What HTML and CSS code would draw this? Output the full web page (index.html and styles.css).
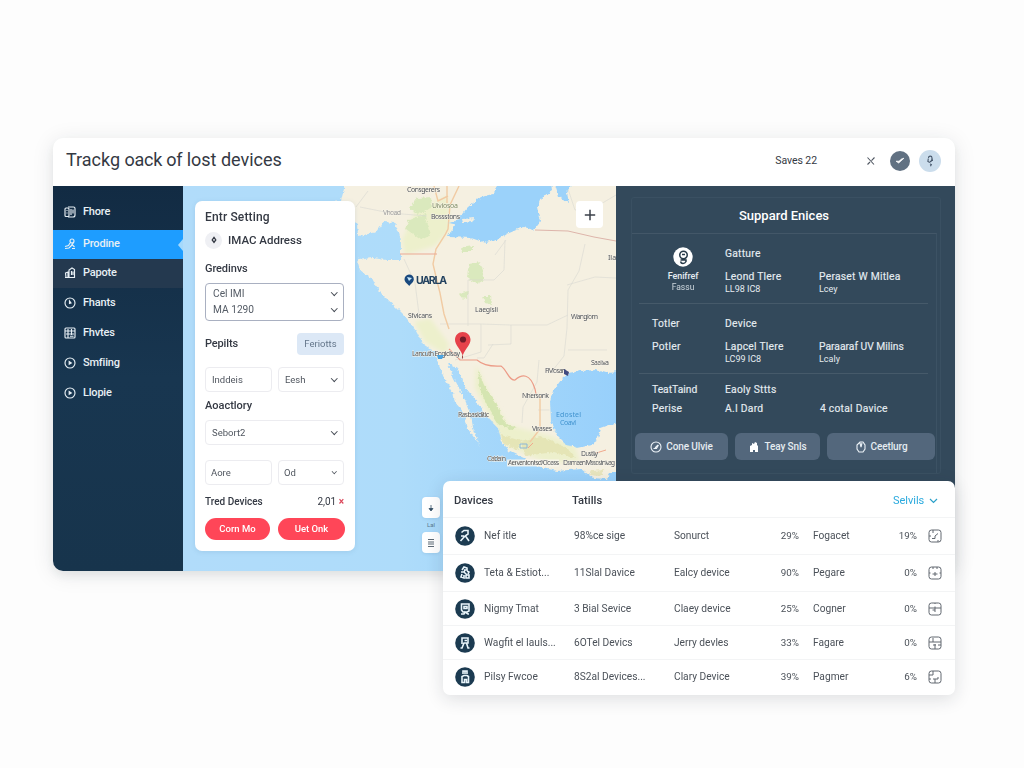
FILE: index.html
```html
<!DOCTYPE html>
<html lang="en">
<head>
<meta charset="utf-8">
<title>Tracking of lost devices</title>
<link rel="stylesheet" href="styles.css">
</head>
<body>
<main class="window">
  <header class="topbar">
    <h1>Trackg <span class="tight">oack of</span> lost devices</h1>
    <span class="saves">Saves 22</span>
    <svg class="close" width="10" height="10" viewBox="0 0 10 10"><path d="M1.5 1.5 8 8.500M8.500 1.500 5.500 4.600M4 6 1.500 8.500" /></svg>
    <span class="status"><svg width="20" height="20" viewBox="0 0 20 20"><path d="M6 10.200 8.700 12 14 7.200 11.500 8 9 10.200Z" fill="#fff" stroke="#fff" stroke-width=".7"/></svg></span>
    <span class="avatar"><svg width="22" height="22" viewBox="0 0 22 22"><path d="M9.500 8c0-2.500 3.500-2.500 3.500 0 .3 2-1 3.500-2 4M9.300 8.500l-.4 3 2 1M11 14l1.300.5-.8 1.700M13 8l.5 3" fill="none" stroke="#46576b" stroke-width="1.100"/></svg></span>
  </header>
  <div class="content">
    <nav class="sidebar">
      <a class="item first"><svg viewBox="0 0 12 12"><rect x="1" y="2" width="4" height="8.500" rx="1"/><path d="M4 1h5.500q1.500 0 1.500 1.500V9q0 2-2 2H4M7 3v6M9 3.500v4M2.500 4.500h1M2.500 7h1"/></svg>Fhore</a>
      <a class="item active"><svg viewBox="0 0 12 12"><circle cx="8" cy="3" r="2"/><path d="M9.500 4.500 8 6.500l2.500 2.500M6 5 4.500 7.500 1 8.500M1 10.500l4-.5 3-3M8 10.500h3"/></svg>Prodine</a>
      <a class="item hovered"><svg viewBox="0 0 12 12"><path d="M5 10.500V3l3-2 2.500 1.500v8zM7.500 4v4M9 4.500V8M1.500 6 4 5v5.500H2zM1 10.500h9"/></svg>Papote</a>
      <a class="item"><svg viewBox="0 0 12 12"><circle cx="6" cy="6" r="5"/><path d="M5.500 4v2.500L7 6z"/></svg>Fhants</a>
      <a class="item"><svg viewBox="0 0 12 12"><rect x="1" y="1" width="10" height="10" rx="1"/><path d="M1 4h10M4 2v9M7.500 2v6M2 7h8M6 9.200h3.500"/></svg>Fhvtes</a>
      <a class="item"><svg viewBox="0 0 12 12"><circle cx="6" cy="6" r="5"/><path d="M5.200 4.500v2.800L7.300 6z" fill="#eef5fa"/></svg>Smfiing</a>
      <a class="item"><svg viewBox="0 0 12 12"><circle cx="6" cy="6" r="5"/><path d="M5.200 4.500v2.800L7.300 6z" fill="#eef5fa"/></svg>Llopie</a>
    </nav>

    <section class="map-area">
      <svg class="map" viewBox="183 186 433 385" width="433" height="385">
        <defs>
          <linearGradient id="sea" x1="0" x2="1"><stop offset="0" stop-color="#b1dcfa"/><stop offset=".5" stop-color="#aedcfa"/><stop offset="1" stop-color="#98d0fb"/></linearGradient>
          <filter id="soft" x="-30%" y="-30%" width="160%" height="160%"><feGaussianBlur stdDeviation="2"/></filter>
          <filter id="rough" x="-5%" y="-5%" width="110%" height="110%"><feTurbulence baseFrequency=".16" numOctaves="3" seed="4"/><feDisplacementMap in="SourceGraphic" scale="4" xChannelSelector="R" yChannelSelector="G"/></filter>
          <clipPath id="landclip"><path d="M345 186H616V371L605 372 595 369 580 370 568 372 560 379 552 390 549 401 550 420 556 435 566 445 577 447 590 444 596 440 600 428 616 422V470L609 472 606 478 592 477 580 468 556 470 537 466 525 458 508 450 501 440 498 428 487 417 478 403 468 391 461 379 457 368 447 362 449 370 457 386 464 400 470 415 473 432 479 445 467 428 463 413 454 402 452 391 443 377 437 362 434 351 422 343 415 330 404 315 396 307 385 297 377 289 371 277 360 270 357 259H400V240L398 232 394 222 383 221 376 231 358 235 357 223 322 202 340 200Z"/></clipPath>
        </defs>
        <rect x="183" y="186" width="433" height="385" fill="url(#sea)"/>
        <g filter="url(#rough)"><path fill="#f5f0e1" d="M345 180H622V371L605 372 595 369 580 370 568 372 560 379 552 390 549 401 550 420 556 435 566 445 577 447 590 444 596 440 600 428 622 420V472L609 472 606 478 592 477 580 468 556 470 537 466 525 458 508 450 501 440 498 428 487 417 478 403 468 391 461 379 457 368 447 362 449 370 457 386 464 400 470 415 473 432 479 445 467 428 463 413 454 402 452 391 443 377 437 362 434 351 422 343 415 330 404 315 396 307 385 297 377 289 371 277 360 270 357 259 372 257 385 259H400V240L398 232 394 222 383 221 376 231 358 235 357 223 322 202 340 200Z"/></g>
        <g clip-path="url(#landclip)">
          <g fill="#edf0cc" filter="url(#soft)"><path d="M402 240 417 208 448 196 450 230 435 246 405 255ZM414 322 430 318 449 344 446 355 425 342ZM476 365 490 395 508 425 550 436 575 446 580 462 545 462 505 445 492 420 475 388Z"/></g>
          <g filter="url(#rough)">
            <path fill="#dae9bd" d="M416 197 430 196 431 208 417 213 408 208ZM409 219 424 213 430 234 420 239 405 228ZM468 263 479 261 485 278 476 283 466 276ZM458 293l10-3-2 8-7-1ZM482 295l8 0 1 9-7-2ZM460 247l12-2v6h-10Z"/>
            <path fill="#d5e5b1" d="M477 369 483 384 495 402 505 423 516 427 510 429 498 424 488 408 479 389Z"/>
            <path fill="#e1dfaa" d="M520 441l20-5 26 11 9 11-22-7-29 4ZM501 434l19 6-4 9-13-6ZM591 470l13-1-5 6-10-1Z" opacity=".65"/>
          </g>
          <g fill="none" stroke="#d9d8d2" stroke-width=".8" opacity=".75"><path d="M360 207 390 213 427 216M356 207 368 191M404 259 415 283 419 314M505 240 504 270 494 280H468V326M506 240 495 255M585 244 579 271 568 290 567 328 564 356 553 370M616 278 595 277 567 285M440 324 481 324 511 325M481 324V352L455 360M511 325V344L488 345M511 325 547 325 568 315M568 350 607 350M493 344 484 358 477 358M539 360 537 382 523 407 522 423M567 186 575 210 594 208 616 195M538 410H562"/></g>
          <g fill="none" stroke="#f1cba3" stroke-width="1.400"><path d="M434 186 438 201 448 196M459 186 450 205 448 229 445 235 436 249 433 264 437 281 440 293 444 314 449 329M447 186V203M540 396V429L530 442"/></g>
          <g fill="none" stroke="#eba994"><path d="M400 254H437" /><path d="M535 230 568 231 594 237 616 241" stroke="#ddb4aa"/><path stroke="#ec9b87" stroke-width="1.200" d="M449 349 460 360H477Q485 367 501 366C507 370 509 381 515 380C522 374 530 373 535 389L536 394"/></g>
          <path d="M593 454 606 450M533 443l-5 5" stroke="#f0a98d" fill="none"/>
        </g>
        <g fill="#9bd2fa" filter="url(#rough)"><path d="M497 180H550L551 190 541 197 537 207 540 220 533 229 522 226 506 233 497 239 485 242 470 237 448 236 457 218 467 206 480 196 493 193ZM553 180H572L566 192 568 202 558 196ZM448 222l12-4 15 0-4 4-14 2Z"/></g>
        <g fill="#f3efe2" filter="url(#rough)"><path d="M461 218l14-1-4 4-9 1Z"/></g>
        <g class="labels">
          <text x="407" y="191.500" textLength="33">Consgerers</text><text x="432" y="208" textLength="26" fill="#7f8d65">Uiviosoa</text><text x="431" y="219" textLength="29">Bossstons</text><text x="383" y="215" textLength="18" fill="#999">Vhoad</text>
          <text x="408" y="318" textLength="24">Sfvicans</text><text x="475" y="312" textLength="23">Laegisli</text><text x="571" y="319" textLength="27">Wangiom</text><text x="608" y="260">Ila</text>
          <text x="412" y="356" textLength="48">Lancuth Engidisay</text><text x="545" y="373" textLength="21">FMosan</text><text x="591" y="365" textLength="18">Saaliva</text><text x="522" y="398" textLength="27">Nhersonk</text><text x="458" y="417" textLength="31">Rasbasiditic</text><text x="532" y="431" textLength="20">Virases</text><text x="581" y="456" textLength="17">Dustlly</text><text x="487" y="461" textLength="19">Oaiderin</text>
          <path d="M507 459.500h52v7h-52Z" fill="#faf8ef" opacity=".8" stroke="none"/>
          <text x="508" y="465" textLength="51">Aerventontsd/Cloass</text><text x="563" y="465" textLength="52">Dsrmaen Mssostnivag</text>
          <text class="sea-name" x="556" y="417" textLength="25">Edostel</text><text class="sea-name" x="560" y="424.500" textLength="16">Coavl</text>
        </g>
        <path d="M437 355h7l-2 4h-4Z" fill="#4aa4e1"/><path d="m564 369 5 3-1 4-4-2Z" fill="#414b80"/><path d="M520 444h7v4h-7Z" fill="none" stroke="#8bb7d5"/>
        <path d="M409 274.500a4.700 4.700 0 0 1 4.800 4.700c0 3.200-3.300 4.600-4.500 6.800-1.500-2.200-4.800-3.600-4.800-6.800a4.700 4.700 0 0 1 4.500-4.700Z" fill="#19497e"/><path d="m407 277 5 1-3 3Z" fill="#c6e7fa"/>
        <text class="place" x="416" y="284" textLength="31">UARLA</text>
        <path d="M462.700 332c4.300 0 7.800 3.300 7.800 7.800 0 5-4.700 8.200-7.800 15.700-3-7.500-7.700-10.700-7.700-15.700 0-4.500 3.500-7.800 7.700-7.800Z" fill="#e6424a"/><circle cx="463" cy="339.500" r="3.100" fill="#721b28"/><path d="M462.500 355.500v3" stroke="#9b4545"/>
      </svg>

      <form class="settings">
        <h2>Entr Setting</h2>
        <div class="mac"><span class="mac-icon"><svg width="8" height="10" viewBox="0 0 8 10"><path d="M4 2.300 5.800 5 4 7.500 2.200 5Z" fill="none" stroke="#343943" stroke-width="1.300"/></svg></span>IMAC Address</div>
        <label class="caption greet">Gredinvs</label>
        <div class="combo">
          <div><span>Cel IMI</span><i class="chevron"></i></div>
          <div><span>MA 1290</span><i class="chevron"></i></div>
        </div>
        <div class="between reports"><label class="caption">Pepilts</label><span class="soft-button">Feriotts</span></div>
        <div class="pair"><span class="field">Inddeis</span><span class="field">Eesh<i class="chevron"></i></span></div>
        <label class="caption assoc">Aoactlory</label>
        <span class="field wide">Sebort2<i class="chevron"></i></span>
        <div class="pair lower"><span class="field near">Aore</span><span class="field near">Od<i class="chevron small"></i></span></div>
        <div class="between total"><strong>Tred Devices</strong><span>2,01 <b>×</b></span></div>
        <div class="actions"><span>Corn Mo</span><span>Uet Onk</span></div>
      </form>
      <button class="zoom-in" aria-label="Zoom in"><svg width="12" height="12" viewBox="0 0 12 12"><path d="M6 .8v10.400M.8 6h10.400" stroke="#3b4049" stroke-width="1.500"/></svg></button>
      <div class="map-tools">
        <span><svg width="8" height="10" viewBox="0 0 8 10"><path d="M4 2v5M2 5.500h4L4 8Z" fill="#334f64" stroke="#334f64" stroke-width=".8"/></svg></span>
        <small>Lal</small>
        <span><svg width="8" height="10" viewBox="0 0 8 10"><path d="M1 1.500h6M1 4h6M1 6h6M1 8.500h6" stroke="#4b5966" stroke-width=".9"/></svg></span>
      </div>
    </section>

    <aside class="support">
      <div class="outline">
        <h2>Suppard Enices</h2>
        <div class="details">
          <div class="group intro">
            <div class="person"><svg width="20" height="20" viewBox="0 0 20 20"><circle cx="10" cy="10" r="9.700" fill="#fff"/><path d="M10.500 4.200a3.600 3.600 0 1 1 0 7.500 3.600 3.600 0 0 1 0-7.500ZM7.500 13h5.500v1.500q-1 2-3 2t-2.500-2M9 7.500h3" fill="none" stroke="#283b4a" stroke-width="1.500"/></svg><b>Fenifref</b><small>Fassu</small></div>
            <div class="stack"><p>Gatture</p><p>Leond Tlere</p><small>LL98 IC8</small></div>
            <div class="stack third"><p>Peraset W Mitlea</p><small>Lcey</small></div>
          </div>
          <div class="group mid">
            <div class="stack"><p>Totler</p><p>Potler</p></div>
            <div class="stack"><p>Device</p><p>Lapcel Tlere</p><small>LC99 IC8</small></div>
            <div class="stack third"><p class="narrow">Paraaraf UV Milins</p><small>Lcaly</small></div>
          </div>
          <div class="group last">
            <div class="stack"><p class="narrow">TeatTaind</p><p>Perise</p></div>
            <div class="stack"><p>Eaoly Sttts</p><p>A.I Dard</p></div>
            <div class="stack four"><p>4 cotal Davice</p></div>
          </div>
          <div class="buttons">
            <span><svg viewBox="0 0 12 12"><circle cx="6" cy="6" r="5"/><path d="M3.500 7.500h3L8.500 4M5 7l3-3"/></svg>Cone Ulvie</span>
            <span><svg viewBox="0 0 12 12"><path d="M2 11V5l2-1V2l2 1 1-2 2 1v2l1 1v6H7V9H5v2Z" fill="#fff" stroke="none"/></svg>Teay Snls</span>
            <span><svg viewBox="0 0 12 12"><path d="M5 1h3l2 3v4l-2 3H4L2 8V4ZM5 2l1 4 1-4"/></svg>Ceetlurg</span>
          </div>
        </div>
      </div>
    </aside>
  </div>
</main>

<section class="devices">
  <div class="row head"><b>Davices</b><b>Tatills</b><a>Selvils <svg width="9" height="6" viewBox="0 0 9 6"><path d="m1 1 3.500 3.500L8 1"/></svg></a></div>
  <div class="row tall"><svg class="badge" viewBox="0 0 20 20"><circle cx="10" cy="10" r="9.800"/><path d="M6.500 6.500 9 4.500h4v3.500l-3 2-4.500 5M10.500 10l3.500 5M6 10h3"/></svg><span>Nef itle</span><span>98%ce sige</span><span>Sonurct</span><span class="pct">29%</span><span>Fogacet</span><span class="pct">19%</span><svg class="square" viewBox="0 0 14 14"><rect x="1" y="1" width="12" height="12" rx="2.500"/><path d="M5 1v3M1 7h2M4 9.500h3V7l3-2.500M10 13v-2"/></svg></div>
  <div class="row tall"><svg class="badge" viewBox="0 0 20 20"><circle cx="10" cy="10" r="9.800"/><path d="M7 7l2-3 3 1v2H9M6 9h3l1-2M12 8l2 1-1 2M7 11l-1 3 3 1v-3M11 12h3v3h-3v-3M9 9l3 3"/></svg><span>Teta &amp; Estiot...</span><span>11Slal Davice</span><span>Ealcy device</span><span class="pct">90%</span><span>Pegare</span><span class="pct">0%</span><svg class="square" viewBox="0 0 14 14"><rect x="1" y="1" width="12" height="12" rx="2.500"/><path d="M5 1v2M9 1v2M7 6v4M4.500 8h5M1 7h1.500M11.500 7H13"/></svg></div>
  <div class="row"><svg class="badge" viewBox="0 0 20 20"><circle cx="10" cy="10" r="9.800"/><path d="M6.500 5h7.500v7l-2 1H8L6.500 11ZM9 7.500h3v2H9ZM6 15h3l1-2 3 2h1"/></svg><span>Nigmy Tmat</span><span>3 Bial Sevice</span><span>Claey device</span><span class="pct">25%</span><span>Cogner</span><span class="pct">0%</span><svg class="square" viewBox="0 0 14 14"><rect x="1" y="1" width="12" height="12" rx="2.500"/><path d="M1 6h12M7 4.500V10M7 1v1M4.500 8H7"/></svg></div>
  <div class="row"><svg class="badge" viewBox="0 0 20 20"><circle cx="10" cy="10" r="9.800"/><path d="M7 11V5h6v5H9L7 15H5.500M11.500 10l1.500 5h1.500M9.500 7.500H12"/></svg><span>Wagfit el Iauls...</span><span>6OTel Devics</span><span>Jerry devles</span><span class="pct">33%</span><span>Fagare</span><span class="pct">0%</span><svg class="square" viewBox="0 0 14 14"><rect x="1" y="1" width="12" height="12" rx="2.500"/><path d="M1 6h4V2M5 6h8M7 8v5M5 9h3M10 9h3"/></svg></div>
  <div class="row"><svg class="badge" viewBox="0 0 20 20"><circle cx="10" cy="10" r="9.800"/><path d="M8 7V4h4v3M7 15.500V9.500l2-1h3l1.500 1v6h-2v-3h-2v3ZM10 4v3"/></svg><span>Pilsy Fwcoe</span><span>8S2al Devices...</span><span>Clary Device</span><span class="pct">39%</span><span>Pagmer</span><span class="pct">6%</span><svg class="square" viewBox="0 0 14 14"><rect x="1" y="1" width="12" height="12" rx="2.500"/><path d="M5 1v4H1M5 9h5V7M1 9h2M7 9v4"/></svg></div>
</section>
</body>
</html>
```
FILE: styles.css
```css
* { box-sizing: border-box; }
html, body { width: 1024px; height: 768px; overflow: hidden; }
body { margin: 0; padding: 138px 69px 0 53px; background: #fdfdfd; color: #343943; font: 11px/14px Roboto, "Liberation Sans", sans-serif; }
h1, h2, p { margin: 0; }
.window { width: 902px; height: 433px; border-radius: 10px; overflow: hidden; background: #fff; box-shadow: 0 3px 22px #2029331a, 0 5px 8px #20293310; }
.topbar { height: 48px; padding: 0 14px 3px 13px; display: flex; align-items: center; }
h1 { flex: 1; padding-bottom: 2px; font-weight: 400; font-size: 18px; line-height: 24px; letter-spacing: -.02px; }
.tight { letter-spacing: -.25px; }
.saves { margin-right: 49px; font-size: 10.500px; letter-spacing: -.08px; }
.close { margin-right: 14px; fill: none; stroke: #505762; stroke-width: 1.1; }
.status, .avatar { display: flex; border-radius: 50%; }
.status { background: #617182; margin-right: 9px; }
.avatar { background: #cbddec; }
.content { display: flex; height: 385px; }
.sidebar { width: 130px; padding-top: 8px; background: linear-gradient(#122b43, #183650 50%, #17344c); color: #e8f0f5; }
.item { display: flex; align-items: center; gap: 7px; height: 30px; padding: 0 0 1px 11px; font-size: 11px; font-weight: 500; letter-spacing: -.2px; }
.item svg { width: 12px; height: 12px; fill: none; stroke: #e8f0f5; stroke-width: 1.15; }
.first { height: 36px; }
.active, .hovered { height: 29px; }
.active { position: relative; background: #1e9dff; }
.active::after { content: ""; position: absolute; right: 0; top: 9px; border: 6px solid transparent; border-left: 0; border-right: 5px solid #a5d9fc; }
.hovered { background: #24394f; }

.map-area { position: relative; width: 433px; padding: 15px 0 0 12px; }
.map { position: absolute; inset: 0; }
.labels { font: 7px "Noto Sans", sans-serif; fill: #4f5358; stroke: #f7f3e9; stroke-width: .8px; paint-order: stroke; }
.sea-name { fill: #4193cf; stroke: none; }
.place { font: 700 10.500px Inter, sans-serif; fill: #244360; }
.settings { position: relative; display: flex; flex-direction: column; width: 160px; height: 350px; padding: 9px 11px 0 10px; background: #fff; border-radius: 7px; box-shadow: 0 1px 5px #32698e22; }
.settings h2 { font-size: 12px; line-height: 14px; font-weight: 500; letter-spacing: .15px; }
.mac { display: flex; align-items: center; gap: 6px; height: 18px; margin-top: 7px; font-size: 11.500px; font-weight: 500; }
.mac-icon { width: 17px; height: 17px; display: grid; place-items: center; border-radius: 50%; background: #eff0f4; }
.caption { font-weight: 500; font-size: 11px; }
.greet { margin-top: 13px; letter-spacing: -.1px; }
.combo { height: 38px; margin-top: 7px; padding: 3px 6px 3px 7px; border: 1px solid #a9b0c1; border-radius: 4px; display: flex; flex-direction: column; justify-content: space-between; font-size: 10.200px; color: #555c66; }
.combo div, .between { display: flex; justify-content: space-between; align-items: center; }
.chevron { width: 4.500px; height: 4.500px; margin: -3px 1px 0 0; border: solid #454b54; border-width: 0 1.200px 1.200px 0; transform: rotate(45deg); }
.reports { margin-top: 11px; height: 23px; }
.reports .caption { letter-spacing: -.15px; }
.soft-button { width: 47px; line-height: 22px; text-align: center; border-radius: 4px; background: #dce8f6; color: #64768a; font-size: 9.500px; }
.pair { display: grid; grid-template-columns: 67px 66px; gap: 6px; margin-top: 12px; }
.field { height: 25px; padding: 0 6px; display: flex; align-items: center; justify-content: space-between; border: 1px solid #ececf0; border-radius: 4px; font-size: 9.500px; color: #50565f; }
.near { padding-left: 5px; }
.small { transform: rotate(45deg) scale(.75); }
.assoc { margin-top: 7px; }
.wide { margin-top: 7px; }
.lower { margin-top: 15px; }
.total { margin-top: 9px; font-size: 10px; height: 15px; }
.total strong { font-weight: 500; }
.total b { color: #db4458; font-size: 10px; }
.actions { display: grid; grid-template-columns: 65px 67px; gap: 8px; margin-top: 9px; }
.actions span { line-height: 22px; border-radius: 11px; background: #ff4658; color: #fff; text-align: center; font-size: 9.500px; font-weight: 500; }
.zoom-in { position: absolute; right: 13px; top: 15px; width: 27px; height: 27px; padding: 0; border: 0; border-radius: 4px; background: #fff; display: grid; place-items: center; }
.map-tools { position: absolute; left: 239px; top: 311px; width: 18px; }
.map-tools span { display: grid; place-items: center; height: 21px; border-radius: 4px; background: #fff; box-shadow: 0 1px 3px #3c6c8e22; }
.map-tools small { display: block; height: 14px; text-align: center; font-size: 6px; color: #587990; }

.support { width: 339px; padding: 11px 14px 0 15px; background: #33495b; color: #e5ecf1; }
.outline { height: 277px; border: 1px solid #3a5062; border-radius: 3px; }
.support h2 { padding: 10px 4px 0 0; text-align: center; font-size: 13px; line-height: 16px; font-weight: 500; color: #fff; height: 35px; }
.details { border-top: 1px solid #435768; border-right: 1px solid #3c5264; height: 240px; padding: 0 7px 0 3px; margin-right: 3px; }
.group { display: grid; grid-template-columns: 73px 94px 1fr; margin: 0 1px 0 4px; padding-left: 13px; border-bottom: 1px solid #465a6a; font-size: 10.300px; }
.group p { line-height: 14px; letter-spacing: .25px; -webkit-text-stroke: .15px; }
.group .narrow { letter-spacing: 0; }
.group small { font-size: 9px; line-height: 10px; }
.stack { display: flex; flex-direction: column; }
.intro { height: 70px; padding-top: 13px; }
.intro .stack p + p { margin-top: 9px; }
.intro .third { padding-top: 23px; }
.person { display: flex; flex-direction: column; align-items: center; padding-right: 11px; }
.person b { margin-top: 3px; font-size: 9px; line-height: 12px; font-weight: 500; letter-spacing: -.1px; }
.person small { line-height: 11px; font-size: 8.500px; opacity: .85; }
.mid { height: 70px; padding-top: 13px; }
.mid p + p { margin-top: 9px; }
.mid .third { padding-top: 23px; }
.last { padding-top: 9px; border: 0; height: 59px; }
.last p + p { margin-top: 5px; }
.four { padding: 19px 0 0 1px; }
.buttons { display: grid; grid-template-columns: 93px 85px 108px; gap: 7px; margin-right: -4px; }
.buttons span { height: 27px; display: flex; align-items: center; justify-content: center; gap: 4px; background: #53677c; border-radius: 6px; font-size: 10px; letter-spacing: -.1px; font-weight: 500; }
.buttons svg { width: 12px; height: 12px; fill: none; stroke: #edf3f8; stroke-width: 1.100; }

.devices { position: absolute; left: 443px; top: 481px; width: 512px; height: 214px; border-radius: 7px; background: #fff; box-shadow: 0 4px 18px #1b252f24; overflow: hidden; }
.row { display: grid; grid-template-columns: 29px 90px 100px 82px 43px 61px 43px 25px; justify-content: start; align-items: center; height: 34px; padding-left: 12px; border-bottom: 1px solid #f3f4f5; font-size: 10.200px; color: #4b5159; white-space: nowrap; }
.row { grid-template-columns: 29px 90px 100px 82px 43px 59px 59px 25px; }
.tall { height: 37px; }
.head { height: 37px; display: flex; font-size: 11.200px; padding: 3px 17px 0 11px; color: #343943; }
.head b { width: 118px; font-weight: 500; }
.head a { margin-left: auto; color: #2baade; font-size: 11px; }
.head svg { fill: none; stroke: #2ba0c9; stroke-width: 1.200; margin-left: 2px; }
.badge { width: 20px; height: 20px; fill: #1c3b51; }
.badge path { fill: none; stroke: #e9f5fb; stroke-width: 1.600; }
.row:last-child { border: 0; }
.pct + span { padding-left: 14px; }
.row .pct { text-align: right; font-size: 9.800px; }
.square { width: 14px; height: 14px; justify-self: end; fill: none; stroke: #626870; stroke-width: 1; }
```
